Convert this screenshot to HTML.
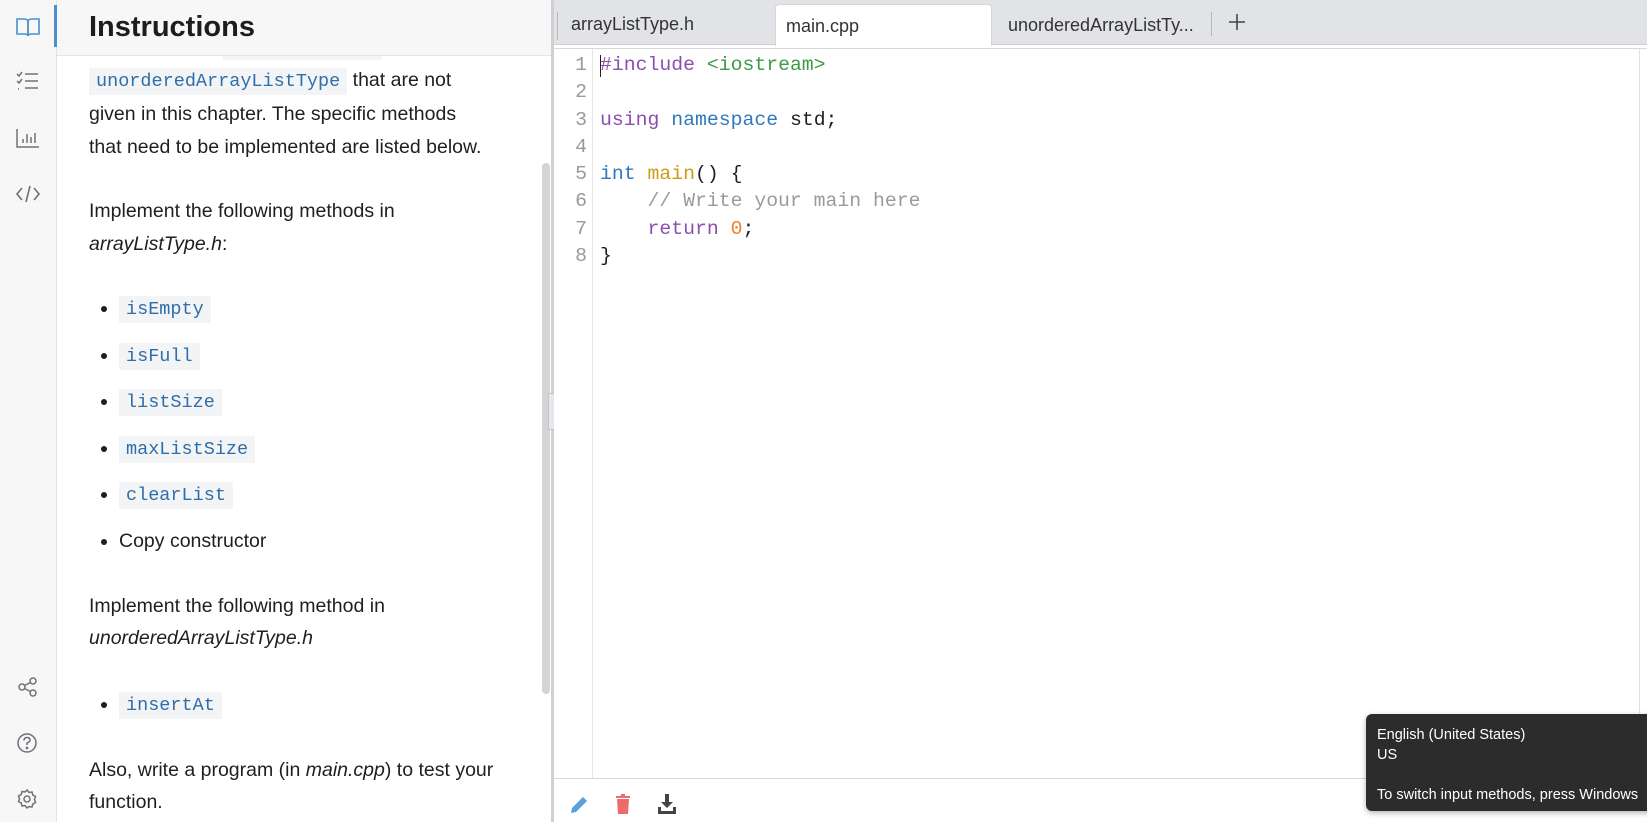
<!DOCTYPE html>
<html><head><meta charset="utf-8"><style>
*{box-sizing:border-box;margin:0;padding:0}
body{width:1647px;height:822px;overflow:hidden;background:#fff;font-family:"Liberation Sans",sans-serif;position:relative;color:#1f1f1f}
.side{position:absolute;left:0;top:0;width:57px;height:822px;background:#f7f7f8;border-right:1px solid #e3e3e6}
.side svg{position:absolute;left:15px}
.act{position:absolute;left:54px;top:5px;width:3px;height:42px;background:#4a90d0}
.panel{position:absolute;left:57px;top:0;width:494px;height:822px;background:#fff;overflow:hidden}
.hdr{position:absolute;left:0;top:0;width:494px;height:56px;background:#f7f7f8;border-bottom:1px solid #e3e3e6;z-index:2}
.hdr h1{position:absolute;left:32px;top:11px;font-size:29px;font-weight:bold;color:#1d1d1f}
.txt{position:absolute;left:32px;top:29px;width:460px;font-size:19.5px;line-height:32.5px}
.txt p{margin:0}
code{font-family:"Liberation Mono",monospace;font-size:18.5px;color:#2f6ea8;background:#f3f4f6;padding:3px 7px}
ul{list-style:disc;margin:32px 0 32px 30px}
li{margin:0 0 12.5px 0;line-height:33px}
.sb{position:absolute;left:542px;top:163px;width:8px;height:531px;background:#d4d4d6;border-radius:4px}
.div{position:absolute;left:551px;top:0;width:3px;height:822px;background:#d0d0d2}
.grip{position:absolute;left:548px;top:393px;width:8px;height:37px;background:#e6e7ea;border:1px solid #c4c4c8;border-radius:2px}
.ed{position:absolute;left:554px;top:0;width:1093px;height:822px;background:#fff}
.tabs{position:absolute;left:0;top:0;width:1093px;height:45px;background:#e1e3e7;border-bottom:1px solid #d0d0d4}
.tab{position:absolute;top:4px;height:41px;font-size:18px;line-height:42px;padding-left:15px;color:#333}
.tab.on{background:#fff;border:1px solid #d5d5d8;border-bottom:none;border-radius:4px 4px 0 0;height:42px}
.sep{position:absolute;top:12px;width:1px;height:24px;background:#b8b8bc}
.line2{position:absolute;left:0;top:48px;width:1093px;height:1px;background:#d8d8dc}
.gut{position:absolute;left:0;top:49px;width:39px;height:729px;border-right:1px solid #e6e6e8}
.code{position:absolute;left:0;top:52px;font-family:"Liberation Mono",monospace;font-size:19.8px;line-height:27.3px;white-space:pre}
.ln{display:inline-block;width:33px;text-align:right;color:#999;margin-right:13px}
.pp{color:#8c4fb0}.st{color:#3f9a48}.kw{color:#8c4fb0}.ty{color:#2f79bf}.fn{color:#d19a15}.cm{color:#9a9a9a}.nu{color:#f0802a}
.bot{position:absolute;left:0;top:778px;width:1093px;height:1px;background:#d8d8dc}
.tip{position:absolute;left:1366px;top:714px;width:290px;height:97px;background:#2c2c2c;border-radius:6px;color:#fff;font-size:14.5px;line-height:20px;padding:11px 0 0 11px;box-shadow:0 2px 6px rgba(0,0,0,.3);white-space:nowrap;overflow:hidden}
</style></head><body>
<div class="side">
<div class="act"></div>
<svg style="top:15px" width="26" height="24" viewBox="0 0 26 24" fill="none" stroke="#4a90d0" stroke-width="1.6"><path d="M2 4h7q4 0 4 3v14q0-2-4-2H2z"/><path d="M24 4h-7q-4 0-4 3v14q0-2 4-2h7z"/></svg>
<svg style="top:70px" width="26" height="22" viewBox="0 0 26 22" fill="none" stroke="#707078" stroke-width="1.5"><path d="M2 4l2 2 3-4M2 11l2 2 3-4M3 19h1"/><path d="M10 4h13M10 11h13M10 18h13"/></svg>
<svg style="top:127px" width="26" height="22" viewBox="0 0 26 22" fill="none" stroke="#707078" stroke-width="1.5"><path d="M2 2v18h22M8 16v-4M12 16v-9M16 16v-6M20 16v-10"/></svg>
<svg style="top:183px" width="26" height="22" viewBox="0 0 26 22" fill="none" stroke="#707078" stroke-width="1.6"><path d="M7 5l-5 6 5 6M19 5l5 6-5 6M15 3l-4 16"/></svg>
<svg style="top:676px" width="26" height="22" viewBox="0 0 26 22" fill="none" stroke="#707078" stroke-width="1.5"><circle cx="7" cy="11" r="3"/><circle cx="18" cy="5" r="3"/><circle cx="18" cy="17" r="3"/><path d="M9.5 9.5l6-3M9.5 12.5l6 3"/></svg>
<svg style="top:732px" width="26" height="22" viewBox="0 0 26 22" fill="none" stroke="#707078" stroke-width="1.5"><circle cx="12" cy="11" r="9"/><path d="M9 8.5q0-3 3-3t3 2.5q0 2-3 3v2"/><circle cx="12" cy="16" r=".6" fill="#707078"/></svg>
<svg style="top:788px" width="26" height="22" viewBox="0 0 26 22" fill="none" stroke="#707078" stroke-width="1.5"><circle cx="12" cy="11" r="3"/><path d="M12 2l2 2.5 3-.5.8 3 2.7 1.5-1 3 1 3-2.7 1.5-.8 3-3-.5L12 20l-2-2.5-3 .5-.8-3L3.5 13.5l1-2.5-1-3L6.2 6.5l.8-3 3 .5z"/></svg>
</div>
<div class="panel">
<div class="hdr"><h1>Instructions</h1></div>
<div class="txt">
<p>methods of &nbsp; &nbsp; &nbsp; <code>arrayListType</code></p>
<p><code>unorderedArrayListType</code> that are not<br>given in this chapter. The specific methods<br>that need to be implemented are listed below.</p>
<p style="margin-top:32px">Implement the following methods in<br><i>arrayListType.h</i>:</p>
<ul>
<li><code>isEmpty</code></li>
<li><code>isFull</code></li>
<li><code>listSize</code></li>
<li><code>maxListSize</code></li>
<li><code>clearList</code></li>
<li>Copy constructor</li>
</ul>
<p>Implement the following method in<br><i>unorderedArrayListType.h</i></p>
<ul style="margin-top:33px"><li><code>insertAt</code></li></ul>
<p>Also, write a program (in <i>main.cpp</i>) to test your<br>function.</p>
</div>
</div>
<div class="sb"></div>
<div class="div"></div>
<div class="grip"></div>
<div class="ed">
<div class="tabs">
<div class="tab" style="left:3px;width:217px;border-left:1px solid #b8b8bc;height:28px;top:12px;line-height:24px;padding-left:13px">arrayListType.h</div>
<div class="tab on" style="left:221px;width:217px;padding-left:10px">main.cpp</div>
<div class="tab" style="left:438px;width:217px;padding-left:16px">unorderedArrayListTy...</div>
<div class="sep" style="left:657px"></div>
<svg style="position:absolute;left:673px;top:12px" width="20" height="20" viewBox="0 0 20 20" stroke="#444" stroke-width="1.6"><path d="M10 2v16M2 10h16"/></svg>
</div>
<div class="line2"></div>
<div class="gut"></div>
<div class="code"><span class="ln">1</span><span class="pp">#include</span> <span class="st">&lt;iostream&gt;</span>
<span class="ln">2</span>
<span class="ln">3</span><span class="kw">using</span> <span class="ty">namespace</span> std;
<span class="ln">4</span>
<span class="ln">5</span><span class="ty">int</span> <span class="fn">main</span>() {
<span class="ln">6</span>    <span class="cm">// Write your main here</span>
<span class="ln">7</span>    <span class="kw">return</span> <span class="nu">0</span>;
<span class="ln">8</span>}</div>
<div style="position:absolute;left:46px;top:55px;width:1px;height:22px;background:#222"></div>
<div class="bot"></div>
<div style="position:absolute;left:1085px;top:49px;width:1px;height:729px;background:#e0e0e2"></div>
<svg style="position:absolute;left:14px;top:794px" width="22" height="22" viewBox="0 0 22 22"><path d="M3 19l1-5L15 3l4 4L8 18z" fill="#5aa0da"/></svg>
<svg style="position:absolute;left:59px;top:793px" width="20" height="22" viewBox="0 0 20 22"><path d="M3 3h14v2H3zM8 1h4v2H8zM4 6h12l-1 15H5z" fill="#ef6b6b"/></svg>
<svg style="position:absolute;left:103px;top:793px" width="20" height="22" viewBox="0 0 20 22"><path d="M8 1h4v8h4l-6 6-6-6h4z" fill="#444"/><path d="M1 14h3v4h12v-4h3v7H1z" fill="#444"/></svg>
</div>
<div class="tip">English (United States)<br>US<br><br>To switch input methods, press Windows</div>
</body></html>
